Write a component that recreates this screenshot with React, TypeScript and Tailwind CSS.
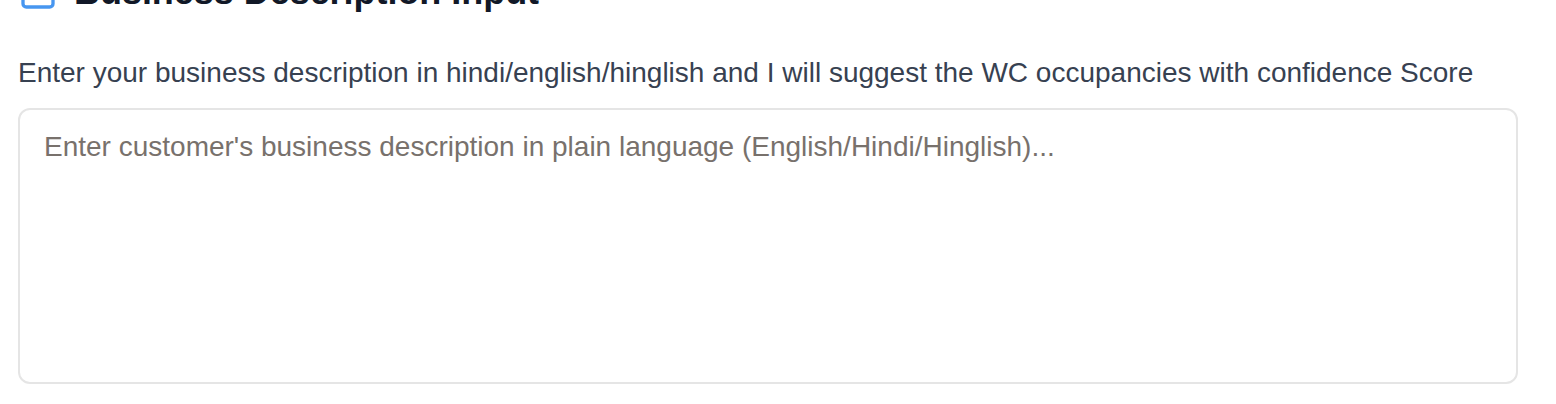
import { Square } from "lucide-react";

export default function App() {
  return (
    <main className="flex h-[404px] flex-col overflow-hidden bg-white px-[18px] font-['Liberation_Sans',Arial,sans-serif]">
      <header className="-mt-7 flex h-10 shrink-0 items-center gap-4">
        <Square className="h-10 w-10 shrink-0 text-[#4796f0]" strokeWidth={2} />
        <h1 className="whitespace-nowrap text-[36px] font-bold leading-10 tracking-[-0.04px] text-[#111827]">Business Description Input</h1>
      </header>
      <label htmlFor="description" className="mt-[41px] block h-10 shrink-0 whitespace-nowrap text-[28px] leading-10 text-[#374151]">
        Enter your business description in hindi/english/hinglish and I will suggest the WC occupancies with confidence Score
      </label>
      <textarea
        id="description"
        className="mt-[15px] h-[276px] w-[1500px] shrink-0 resize-none rounded-xl border-2 border-[#e5e5e5] bg-white px-6 py-[17px] text-[28px] leading-10 text-[#374151] outline-none placeholder:text-[#78716c]"
        placeholder="Enter customer's business description in plain language (English/Hindi/Hinglish)..."
      />
    </main>
  );
}
